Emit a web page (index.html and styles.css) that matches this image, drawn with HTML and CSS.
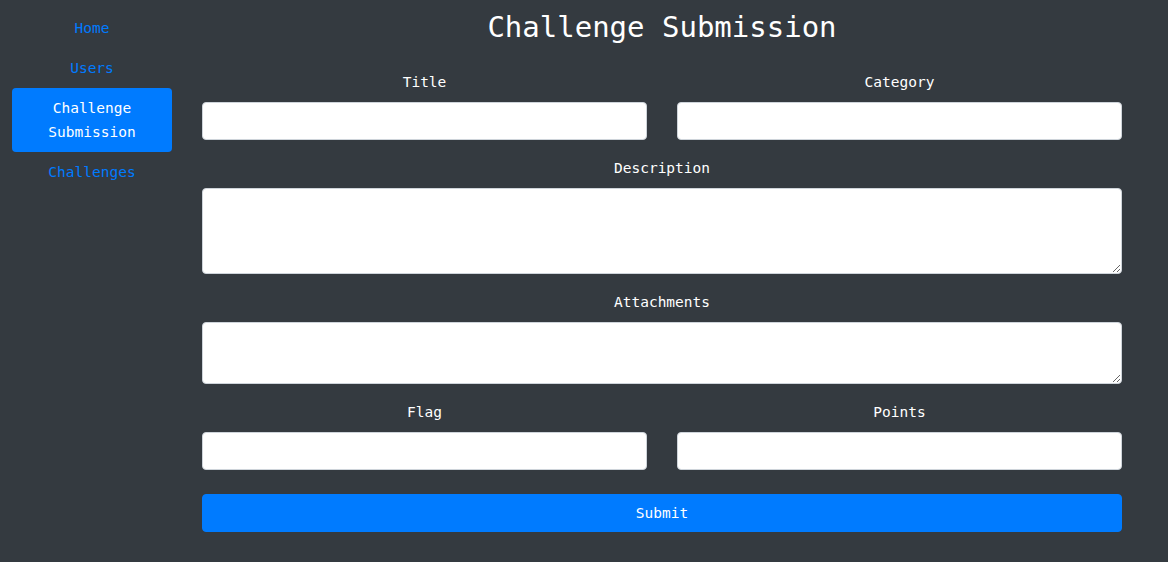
FILE: index.html
```html
<!DOCTYPE html>
<html>
<head>
<meta charset="utf-8">
<link rel="stylesheet" href="styles.css">
</head>
<body>
<div class="layout">
  <nav class="sidebar">
    <a class="nav-link" href="#">Home</a>
    <a class="nav-link" href="#">Users</a>
    <a class="nav-link active" href="#">Challenge Submission</a>
    <a class="nav-link" href="#">Challenges</a>
  </nav>
  <main class="main">
    <h1 class="title">Challenge Submission</h1>
    <form class="form">
      <div class="row">
        <div class="group">
          <label class="label">Title</label>
          <input class="control" type="text">
        </div>
        <div class="group">
          <label class="label">Category</label>
          <input class="control" type="text">
        </div>
      </div>
      <div class="group">
        <label class="label">Description</label>
        <textarea class="control textarea-lg"></textarea>
      </div>
      <div class="group">
        <label class="label">Attachments</label>
        <textarea class="control textarea-sm"></textarea>
      </div>
      <div class="row row-last">
        <div class="group">
          <label class="label">Flag</label>
          <input class="control" type="text">
        </div>
        <div class="group">
          <label class="label">Points</label>
          <input class="control" type="text">
        </div>
      </div>
      <button class="submit" type="button">Submit</button>
    </form>
  </main>
</div>
</body>
</html>
```
FILE: styles.css
```css
html, body {
  margin: 0;
  padding: 0;
  background: #343a40;
  height: 100%;
}
body {
  font-family: "DejaVu Sans Mono", "Liberation Mono", monospace;
  font-size: 14.5px;
  line-height: 24px;
  color: #fff;
}
.layout {
  display: flex;
  align-items: flex-start;
}
.sidebar {
  width: 160px;
  margin: 8px 0 0 12px;
  display: flex;
  flex-direction: column;
}
.nav-link {
  display: block;
  padding: 8px 16px;
  text-align: center;
  color: #007bff;
  text-decoration: none;
  border-radius: 4px;
}
.nav-link.active {
  background: #007bff;
  color: #fff;
}
.main {
  width: 920px;
  margin-left: 30px;
}
.title {
  margin: 0;
  padding-top: 8px;
  font-size: 29px;
  line-height: 38px;
  font-weight: normal;
  text-align: center;
  color: #fff;
}
.form {
  margin-top: 24px;
  display: flex;
  flex-direction: column;
}
.row {
  display: flex;
  gap: 30px;
}
.row .group {
  flex: 1;
}
.row-last {
  margin-bottom: 8px;
}
.group {
  display: flex;
  flex-direction: column;
  margin-bottom: 16px;
}
.label {
  display: block;
  text-align: center;
  margin-bottom: 8px;
  line-height: 24px;
}
.control {
  box-sizing: border-box;
  width: 100%;
  height: 38px;
  margin: 0;
  padding: 6px 12px;
  background: #fff;
  border: 1px solid #ced4da;
  border-radius: 4px;
  font-family: inherit;
  font-size: 14.5px;
  display: block;
}
.textarea-lg {
  height: 86px;
}
.textarea-sm {
  height: 62px;
}
.submit {
  height: 38px;
  width: 100%;
  border: 1px solid #007bff;
  border-radius: 4px;
  background: #007bff;
  color: #fff;
  font-family: inherit;
  font-size: 14.5px;
  line-height: 24px;
  padding: 6px 12px;
}
```
